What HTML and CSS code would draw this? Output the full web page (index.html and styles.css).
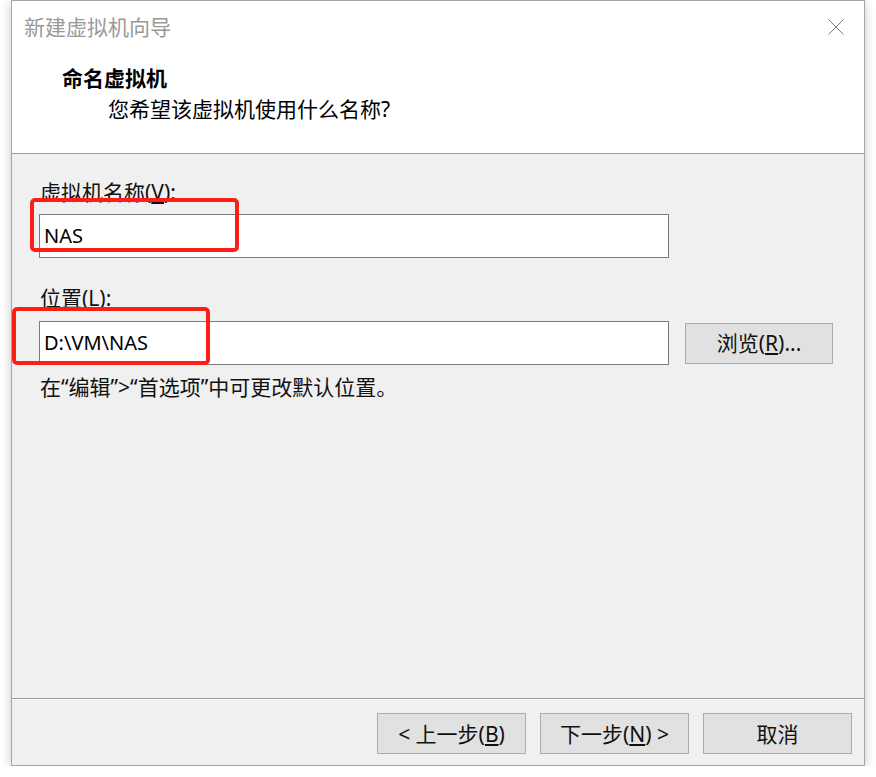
FILE: index.html
```html
<!DOCTYPE html>
<html lang="zh-CN">
<head>
<meta charset="utf-8">
<title>新建虚拟机向导</title>
<link rel="stylesheet" href="styles.css">
</head>
<body>
<div class="dialog">
  <div class="header">
    <div class="titlebar">
      <span class="title">新建虚拟机向导</span>
      <svg class="close" width="16" height="16" viewBox="0 0 16 16"><path d="M0.5 0.5 L15.5 15.5 M15.5 0.5 L0.5 15.5" stroke="#7a7a7a" stroke-width="1" fill="none"/></svg>
    </div>
    <div class="heading">命名虚拟机</div>
    <div class="subtitle">您希望该虚拟机使用什么名称?</div>
  </div>
  <div class="body">
    <div class="label">虚拟机名称(<u>V</u>):</div>
    <div class="row">
      <div class="input">NAS</div>
    </div>
    <div class="label label-2">位置(<u>L</u>):</div>
    <div class="row">
      <div class="input">D:\VM\NAS</div>
      <div class="btn btn-browse">浏览(<u>R</u>)...</div>
    </div>
    <div class="hint">在“编辑”&gt;“首选项”中可更改默认位置。</div>
  </div>
  <div class="footer">
    <div class="btn">&lt; 上一步(<u>B</u>)</div>
    <div class="btn">下一步(<u>N</u>) &gt;</div>
    <div class="btn">取消</div>
  </div>
  <div class="mark mark-name"></div>
  <div class="mark mark-loc"></div>
</div>
</body>
</html>
```
FILE: styles.css
```css
html, body {
  margin: 0;
  padding: 0;
  background: #ffffff;
}
body {
  font-family: "Noto Sans", "Noto Sans CJK SC", sans-serif;
  font-size: 21px;
  color: #111;
}
.dialog {
  position: relative;
  margin-left: 11px;
  width: 854px;
  height: 766px;
  box-sizing: border-box;
  border: 1px solid #a6a6a6;
  background: #f0f0f0;
  display: flex;
  flex-direction: column;
  box-shadow: 0 2px 10px rgba(0, 0, 0, 0.22);
}
.header {
  height: 152px;
  background: #ffffff;
  border-bottom: 1px solid #a0a0a0;
  flex: none;
}
.titlebar {
  display: flex;
  align-items: center;
  justify-content: space-between;
  padding: 12px 20px 0 12px;
  height: 28px;
}
.title {
  color: #999999;
  line-height: 28px;
}
.close {
  display: block;
}
.heading {
  margin-top: 23px;
  padding-left: 50px;
  font-weight: bold;
  line-height: 28px;
  color: #000;
}
.subtitle {
  margin-top: 3px;
  padding-left: 96px;
  line-height: 28px;
  color: #000;
}
.body {
  flex: 1;
  padding: 26px 0 0 27px;
}
.label {
  line-height: 24px;
  padding-left: 1px;
}
.label-2 {
  margin-top: 28px;
}
.row {
  display: flex;
  align-items: center;
  gap: 16px;
  margin-top: 10px;
}
.label-2 + .row {
  margin-top: 11px;
}
.input {
  width: 630px;
  height: 44px;
  box-sizing: border-box;
  border: 1px solid #7a7a7a;
  background: #fff;
  font-size: 20px;
  line-height: 42px;
  padding-left: 4px;
  color: #000;
}
.btn {
  width: 149px;
  height: 41px;
  box-sizing: border-box;
  border: 1px solid #adadad;
  background: #e1e1e1;
  display: flex;
  align-items: center;
  justify-content: center;
  line-height: 24px;
  color: #111;
}
.btn-browse {
  width: 148px;
}
.hint {
  margin-top: 10px;
  line-height: 24px;
  padding-left: 1px;
}
.footer {
  flex: none;
  height: 67px;
  box-sizing: border-box;
  border-top: 1px solid #a0a0a0;
  box-shadow: inset 0 1px 0 #ffffff;
  display: flex;
  justify-content: flex-end;
  gap: 14px;
  padding: 14px 12px 0 0;
}
.mark {
  position: absolute;
  box-sizing: border-box;
  border: 4px solid #fc1f17;
  border-radius: 5px;
}
.mark-name {
  left: 18px;
  top: 197px;
  width: 209px;
  height: 54px;
}
.mark-loc {
  left: 0;
  top: 306px;
  width: 198px;
  height: 58px;
}
```
